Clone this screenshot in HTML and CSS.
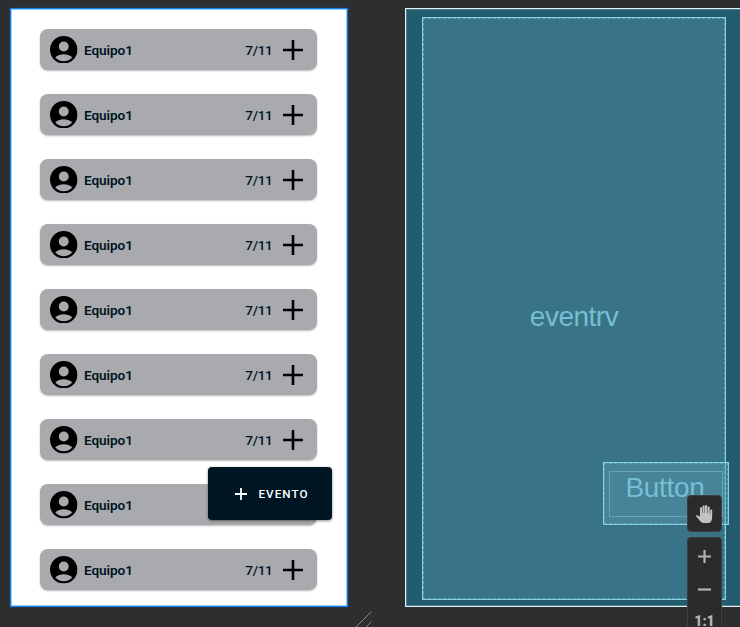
FILE: index.html
```html
<!DOCTYPE html>
<html lang="es">
<head>
<meta charset="utf-8">
<title>Eventos</title>
<link rel="stylesheet" href="styles.css">
</head>
<body>
<svg class="defs" aria-hidden="true">
  <symbol id="person" viewBox="2 2 20 20"><path d="M12 2C6.480 2 2 6.480 2 12s4.480 10 10 10 10-4.480 10-10S17.520 2 12 2zm0 4a3.600 3.600 0 0 1 0 7.200A3.600 3.600 0 0 1 12 6zM12 20.300c-2.500 0-4.700-1.050-6.200-2.850C7.400 16 9.900 15.300 12 15.300s4.600.7 6.200 2.150C16.700 19.250 14.500 20.300 12 20.300z"/></symbol>
  <symbol id="plus" viewBox="0 0 20 20"><path d="M8.700 0h2.600v8.700H20v2.600h-8.700V20H8.700v-8.700H0V8.700h8.700z"/></symbol>
</svg>
<main class="workspace">
  <section class="screen">
    <ul class="teams">
      <li class="team"><svg class="avatar"><use href="#person"/></svg><span class="name">Equipo1</span><span class="count">7/11</span><svg class="add"><use href="#plus"/></svg></li>
      <li class="team"><svg class="avatar"><use href="#person"/></svg><span class="name">Equipo1</span><span class="count">7/11</span><svg class="add"><use href="#plus"/></svg></li>
      <li class="team"><svg class="avatar"><use href="#person"/></svg><span class="name">Equipo1</span><span class="count">7/11</span><svg class="add"><use href="#plus"/></svg></li>
      <li class="team"><svg class="avatar"><use href="#person"/></svg><span class="name">Equipo1</span><span class="count">7/11</span><svg class="add"><use href="#plus"/></svg></li>
      <li class="team"><svg class="avatar"><use href="#person"/></svg><span class="name">Equipo1</span><span class="count">7/11</span><svg class="add"><use href="#plus"/></svg></li>
      <li class="team"><svg class="avatar"><use href="#person"/></svg><span class="name">Equipo1</span><span class="count">7/11</span><svg class="add"><use href="#plus"/></svg></li>
      <li class="team"><svg class="avatar"><use href="#person"/></svg><span class="name">Equipo1</span><span class="count">7/11</span><svg class="add"><use href="#plus"/></svg></li>
      <li class="team"><svg class="avatar"><use href="#person"/></svg><span class="name">Equipo1</span></li>
      <li class="team"><svg class="avatar"><use href="#person"/></svg><span class="name">Equipo1</span><span class="count">7/11</span><svg class="add"><use href="#plus"/></svg></li>
    </ul>
    <button class="event"><svg viewBox="0 0 12 12"><path d="M6 0v12M0 6h12" stroke="#fff" stroke-width="1.800"/></svg><span>EVENTO</span></button>
    <svg class="grip" viewBox="0 0 17 17"><path d="M0 17L16.500.5M10 17l6.500-6.500" stroke="#8b8c8d" fill="none"/></svg>
  </section>
  <section class="blueprint">
    <div class="recycler"><span>eventrv</span></div>
    <div class="bp-button"><div class="bp-inner"><span>Button</span></div></div>
  </section>
</main>
<div class="tools">
  <div class="tool-box pan"><svg viewBox="0 0 17 18"><path d="M7 18C4.600 17.400 3.300 15 .3 11.600c-.7-.9.3-1.700 1.300-1.300L4 11.700V3.200c0-1.300 2-1.300 2 0v4.900h.5V1.500c0-1.300 2.100-1.300 2.100 0v6.600H9V.9c0-1.300 2.100-1.100 2.100.1v7.100h.5V2.500c0-1.200 2.100-1.200 2.100 0v6.800h.5V5.500c0-1.200 2-1.200 2 0V12c0 3-1.200 5.400-3.100 6z" fill="#c2c2c2"/></svg></div>
  <div class="tool-box zoom">
    <svg class="z" viewBox="0 0 13 13"><path d="M6.500 0v13M0 6.500h13" stroke="#b4b4b4" stroke-width="2.200"/></svg>
    <svg class="z" viewBox="0 0 13 13"><path d="M0 6.500h13" stroke="#b4b4b4" stroke-width="2.200"/></svg>
    <span class="ratio">1:1</span>
  </div>
</div>
</body>
</html>
```
FILE: styles.css
```css
* { box-sizing: border-box; }
body { margin: 0; height: 627px; overflow: hidden; background: #2d2e30; font-family: Roboto, sans-serif; position: relative; }
.defs { position: absolute; width: 0; height: 0; }
.workspace { display: flex; gap: 57px; padding: 8px 0 0 10px; }
.screen { position: relative; flex: none; width: 338px; height: 599px; background: #fff; border: 1px solid #0f7fee; border-right-color: #1673cc; box-shadow: inset 0 0 0 1px #9ccbf6, 0 0 0 .5px #24405f; }
.teams { list-style: none; margin: 0; padding: 20px 30px 0 28.600px; display: flex; flex-direction: column; gap: 24.050px; }
.team { display: flex; align-items: center; height: 41px; padding: 0 14px 0 10.500px; border-radius: 8px; background: #a9aaae; box-shadow: 0 1px 2px rgba(0,0,0,.28); color: #001522; }
.avatar { width: 27.500px; height: 27.500px; margin-right: 6.500px; }
.name { flex: 1; padding-top: 1px; font-size: 13.600px; font-weight: 600; letter-spacing: -.1px; }
.count { padding-top: 1px; font-size: 13.600px; font-weight: 500; letter-spacing: -.3px; margin-right: 10.500px; }
.add { width: 20px; height: 20px; }
.event { position: absolute; left: 197px; top: 458px; width: 124px; height: 53px; display: flex; align-items: center; justify-content: center; gap: 11px; border: 0; border-radius: 4px; background: #001522; color: #fff; font: 500 11.700px Roboto, sans-serif; letter-spacing: 1.050px; box-shadow: 0 1px 3px rgba(0,0,0,.45); padding: 0 0 0 4px; }
.event svg { width: 12px; height: 12px; }
.grip { position: absolute; left: 344px; top: 602px; width: 17px; height: 17px; }
.blueprint { position: relative; flex: none; width: 335px; height: 599px; padding: 8px 0 0 16px; background: #235c6f; border: 1px solid #e5f2f5; border-right: 0; box-shadow: inset 1px 1px 0 #4f8291, inset 0 -1px 0 #4f8291; }
.recycler { display: flex; align-items: center; justify-content: center; width: 304px; height: 583px; background: #397387; border: 1px solid #88d1e1; outline: 1px dashed #5ba4b6; outline-offset: -2px; color: #76bfd2; font: 28px "Liberation Sans", sans-serif; letter-spacing: -.5px; }
.recycler span { padding-top: 16px; }
.bp-button { position: absolute; left: 197px; top: 453px; width: 126px; height: 63px; padding: 8px 5px; background: rgba(90,157,178,.42); border: 1px solid #88d1e1; outline: 1px dashed #5ba4b6; outline-offset: -2px; }
.bp-inner { height: 46px; padding-right: 2px; border: 1px solid #60a7ba; color: #76bfd2; text-align: center; font: 28px/32px "Liberation Sans", sans-serif; letter-spacing: -.3px; }
.tools { position: absolute; left: 687px; top: 495px; width: 35px; display: flex; flex-direction: column; gap: 5px; }
.tool-box { background: #2b2b2b; border: 1px solid #3c3d3d; border-radius: 4px; display: flex; flex-direction: column; align-items: center; }
.pan { height: 37px; justify-content: center; }
.pan svg { width: 17px; height: 18px; }
.zoom { height: 90px; border-bottom: 0; border-radius: 4px 4px 0 0; padding-top: 11.500px; gap: 20px; }
.z { width: 13px; height: 13px; flex: none; }
.ratio { color: #b4b4b4; font: 900 14px/16px Roboto, sans-serif; margin-top: -2.500px; }
```
